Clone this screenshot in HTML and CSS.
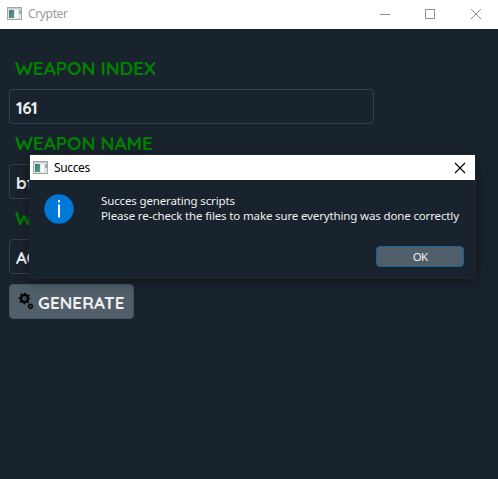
FILE: index.html
```
<!DOCTYPE html>
<html lang="en">
<head>
<meta charset="utf-8">
<title>Crypter</title>
<link rel="stylesheet" href="styles.css">
</head>
<body>
<svg width="0" height="0" class="defs">
  <defs>
    <linearGradient id="pic" x1="0" y1="0" x2="1" y2="1"><stop offset="0" stop-color="#3c6f9c"/><stop offset="1" stop-color="#58a674"/></linearGradient>
    <symbol id="app" viewBox="0 0 15 13">
      <rect x=".5" y=".5" width="14" height="12" fill="#e4e4e4" stroke="#a6a6a6"/>
      <path d="M1 1.500H14" stroke="#c9cdd0"/>
      <rect x="2" y="3" width="5" height="8" fill="url(#pic)"/>
      <rect x="8" y="3" width="3" height="8" fill="#f8f8f8"/>
      <rect x="12" y="3" width="2" height="4" fill="#8cb8a8"/>
    </symbol>
  </defs>
</svg>
<div class="window">
  <header class="titlebar">
    <svg class="app-icon" width="15" height="13"><use href="#app" width="15" height="13"/></svg>
    <span class="title">Crypter</span>
    <svg class="controls" width="102" height="12" viewBox="0 0 102 12" fill="none" stroke="#8f8f8f">
      <path d="M0 6.500H10M45.500 1.500h9v9h-9zM91 1l10 10M101 1L91 11"/>
    </svg>
  </header>
  <main class="form">
    <label class="label">WEAPON INDEX</label>
    <div class="input">161</div>
    <label class="label">WEAPON NAME</label>
    <div class="input">bf</div>
    <label class="label">WE</label>
    <div class="input">AC</div>
    <button class="generate">
      <svg width="16" height="18" viewBox="0 0 16 18" fill="none" stroke="#050607">
        <circle cx="6.500" cy="6.500" r="3.400" stroke-width="2.500"/>
        <circle cx="6.500" cy="6.500" r="5" stroke-width="1.700" stroke-dasharray="2 1.927" stroke-dashoffset="1"/>
        <circle cx="6.500" cy="6.500" r=".6" fill="#050607" stroke="none"/>
        <circle cx="12.500" cy="14.300" r="1.800" stroke-width="1.500"/>
        <circle cx="12.500" cy="14.300" r="2.500" stroke-width=".8" stroke-dasharray="1 .963"/>
      </svg>
      <span>GENERATE</span>
    </button>
  </main>
  <section class="dialog">
    <header class="dialog-bar">
      <svg class="app-icon" width="15" height="13"><use href="#app" width="15" height="13"/></svg>
      <span class="title">Succes</span>
      <svg class="close" width="10" height="10" viewBox="0 0 10 10" stroke="#000" stroke-width="1.100"><path d="M0 0L10 10M10 0L0 10"/></svg>
    </header>
    <div class="message">
      <svg width="30" height="30" viewBox="0 0 30 30">
        <circle cx="15" cy="15" r="14.700" fill="#0078d7"/>
        <path d="M14 10.500h2v13h-2zM14 6h2v2.200h-2z" fill="#fff"/>
      </svg>
      <div class="lines">
        <div>Succes generating scripts</div>
        <div>Please re-check the files to make sure everything was done correctly</div>
      </div>
    </div>
    <button class="ok">OK</button>
  </section>
</div>
</body>
</html>
```
FILE: styles.css
```
* { box-sizing: border-box; }
body { margin: 0; overflow: hidden; font-family: "Noto Sans", sans-serif; }
.defs { position: absolute; }
.window { position: relative; width: 498px; height: 479px; background: #19232d; }
.titlebar { display: flex; align-items: center; height: 29px; padding: 0 16px 2px 7px; background: #fff; color: #999; font-size: 12px; }
.title { margin-left: 6px; letter-spacing: -0.35px; }
.controls { margin-left: auto; }
.form { display: flex; flex-direction: column; align-items: flex-start; padding: 20px 9px 0; font-family: Quicksand, Lato, sans-serif; font-weight: 700; font-size: 17px; }
.label { height: 40px; padding-left: 6px; font-size: 19px; line-height: 38px; letter-spacing: -0.08px; color: #008000; white-space: nowrap; }
.input { width: 365px; height: 35px; padding-left: 6px; border: 1px solid #32414b; border-radius: 4px; line-height: 36px; letter-spacing: -0.3px; color: #f0f0f0; }
.generate { display: flex; align-items: center; width: 125px; height: 35px; margin-top: 10px; padding: 0 0 0 8px; border: 1px solid #44535e; border-radius: 4px; background: #505f69; color: #f0f0f0; font: inherit; letter-spacing: 0.1px; }
.generate svg { margin: 0 4px 1px 0; flex: none; }
.generate span { padding-top: 2px; }
.dialog { position: absolute; left: 30px; top: 155px; width: 445px; height: 123px; background: #19232d; box-shadow: 0 0 0 1px #20252a, 0 3px 12px rgba(0, 0, 0, 0.45); }
.dialog-bar { display: flex; align-items: center; height: 25px; padding: 0 10px 0 3px; background: #fff; color: #000; font-size: 12px; }
.dialog-bar .title { padding-bottom: 1px; }
.close { margin-left: auto; overflow: visible; }
.message { display: flex; padding: 14px 0 0 14px; color: #f0f0f0; font-size: 11.5px; letter-spacing: -0.14px; line-height: 15px; white-space: nowrap; }
.message svg { flex: none; }
.lines { margin: -1px 0 1px 27px; }
.ok { display: block; width: 88px; height: 21px; margin: 22px 0 0 346px; padding: 0; border: 1px solid #1464a0; border-radius: 4px; background: #505f69; color: #f0f0f0; font: 11.5px/18px "Noto Sans", sans-serif; letter-spacing: -0.8px; }
```
